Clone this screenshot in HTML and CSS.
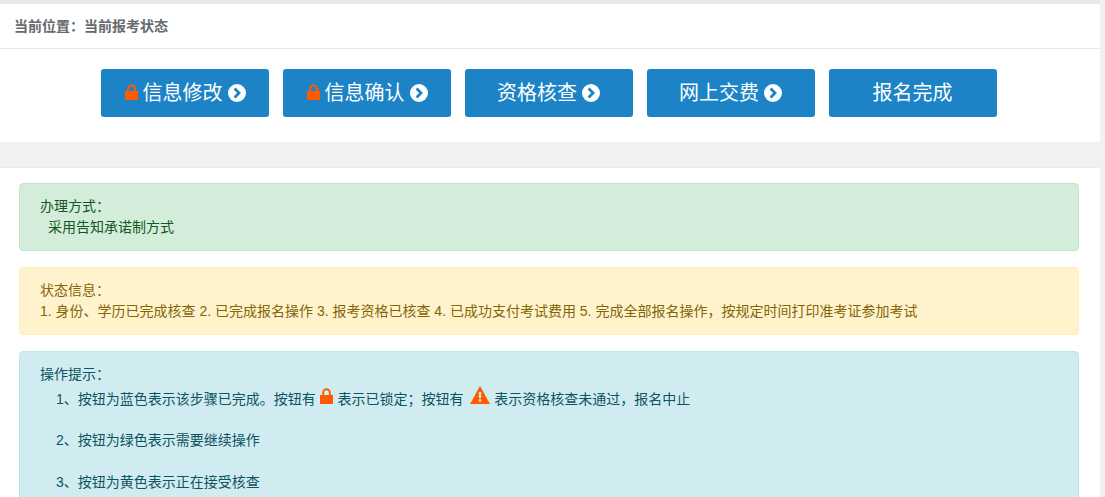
FILE: index.html
```html
<!DOCTYPE html>
<html lang="zh-CN">
<head>
<meta charset="utf-8">
<title>当前报考状态</title>
<link rel="stylesheet" href="styles.css">
</head>
<body>
<div class="page">
  <header class="crumb">当前位置：当前报考状态</header>
  <nav class="steps">
    <a class="step"><svg class="lock lock-btn" viewBox="0 0 13 16"><path d="M0 7h13v9H0zM2.2 7V4.6a4.3 4.3 0 0 1 8.6 0V7H8.9V4.7a2.4 2.4 0 0 0-4.8 0V7z"/></svg>信息修改<svg class="go" viewBox="0 0 18 18"><circle cx="9" cy="9" r="9" fill="#fff"/><path d="M6.6 4.6 11 9l-4.400 4.400" fill="none" stroke="#1d84c6" stroke-width="2.800"/></svg></a>
    <a class="step"><svg class="lock lock-btn" viewBox="0 0 13 16"><path d="M0 7h13v9H0zM2.2 7V4.6a4.3 4.3 0 0 1 8.6 0V7H8.900V4.700a2.400 2.400 0 0 0-4.800 0V7z"/></svg>信息确认<svg class="go" viewBox="0 0 18 18"><circle cx="9" cy="9" r="9" fill="#fff"/><path d="M6.6 4.6 11 9l-4.400 4.400" fill="none" stroke="#1d84c6" stroke-width="2.800"/></svg></a>
    <a class="step">资格核查<svg class="go" viewBox="0 0 18 18"><circle cx="9" cy="9" r="9" fill="#fff"/><path d="M6.6 4.6 11 9l-4.400 4.400" fill="none" stroke="#1d84c6" stroke-width="2.800"/></svg></a>
    <a class="step">网上交费<svg class="go" viewBox="0 0 18 18"><circle cx="9" cy="9" r="9" fill="#fff"/><path d="M6.6 4.6 11 9l-4.400 4.400" fill="none" stroke="#1d84c6" stroke-width="2.800"/></svg></a>
    <a class="step">报名完成</a>
  </nav>
  <div class="band"></div>
  <main class="content">
    <section class="alert success">办理方式：<br><span class="indent-sm">采用告知承诺制方式</span></section>
    <section class="alert warning">状态信息：<br>1. 身份、学历已完成核查 2. 已完成报名操作 3. 报考资格已核查 4. 已成功支付考试费用 5. 完成全部报名操作，按规定时间打印准考证参加考试</section>
    <section class="alert info">操作提示：
      <p class="tip tip-first">1、按钮为蓝色表示该步骤已完成。按钮有 <svg class="lock lock-sm" viewBox="0 0 13 16"><path d="M0 7h13v9H0zM2.2 7V4.6a4.3 4.3 0 0 1 8.6 0V7H8.900V4.700a2.400 2.400 0 0 0-4.800 0V7z"/></svg> 表示已锁定；按钮有 <svg class="warn" viewBox="0 0 20 18"><path fill-rule="evenodd" d="M10 0 20 18H0zM8.800 6v6h2.400V6zM8.800 13.200v2.300h2.400v-2.300z"/></svg> 表示资格核查未通过，报名中止</p>
      <p class="tip">2、按钮为绿色表示需要继续操作</p>
      <p class="tip">3、按钮为黄色表示正在接受核查</p>
    </section>
  </main>
</div>
</body>
</html>
```
FILE: styles.css
```css
* { box-sizing: border-box; }
html, body { margin: 0; height: 497px; overflow: hidden; }
body {
  background: #f1f1f1;
  font: 14px/20px "Liberation Sans", "Noto Sans CJK SC", sans-serif;
}
.page { width: 1100px; height: 497px; overflow: hidden; background: #fff; border-top: 4px solid #e7eaec; }
.crumb {
  height: 45px;
  padding: 12px 14px 0;
  border-bottom: 1px solid #e7eaec;
  color: #676a6c;
  font-weight: 700;
  line-height: 20px;
}
.steps { display: flex; gap: 14px; justify-content: center; padding: 20px 0 25px 0; width: 1097px; }
.step {
  width: 168px; height: 48px;
  display: flex; align-items: center; justify-content: center; gap: 5px;
  background: #1c84c6; border-radius: 3px;
  color: #fff; font-size: 20px;
}
.lock { width: 13px; height: 16px; fill: #ff5a00; }
.lock-btn { margin: -2px 0 0 1px; }
.go { width: 18px; height: 18px; }
.band { height: 26px; background: #f1f1f1; border-bottom: 1px solid #e7eaec; }
.content { padding: 15px 21px 0 19px; background: #fff; }
.alert {
  padding: 12px 20px;
  margin-bottom: 16px;
  border: 1px solid transparent;
  border-radius: 4px;
  line-height: 21px;
}
.success { background: #d4edda; border-color: #c3e6cb; color: #155724; }
.warning { background: #fff3cd; border-color: #ffeeba; color: #856404; }
.info { background: #d1ecf1; border-color: #bee5eb; color: #0c5460; }
.indent-sm { padding-left: 8px; }
.tip { margin: 0 0 21px; padding-left: 16px; line-height: 21px; }
.tip-first { margin: 1px 0 20px; }
.lock-sm { vertical-align: 0; margin-right: 1px; }
.warn { width: 20px; height: 18px; fill: #ff5a00; vertical-align: 0; margin-left: 3px; }
```
